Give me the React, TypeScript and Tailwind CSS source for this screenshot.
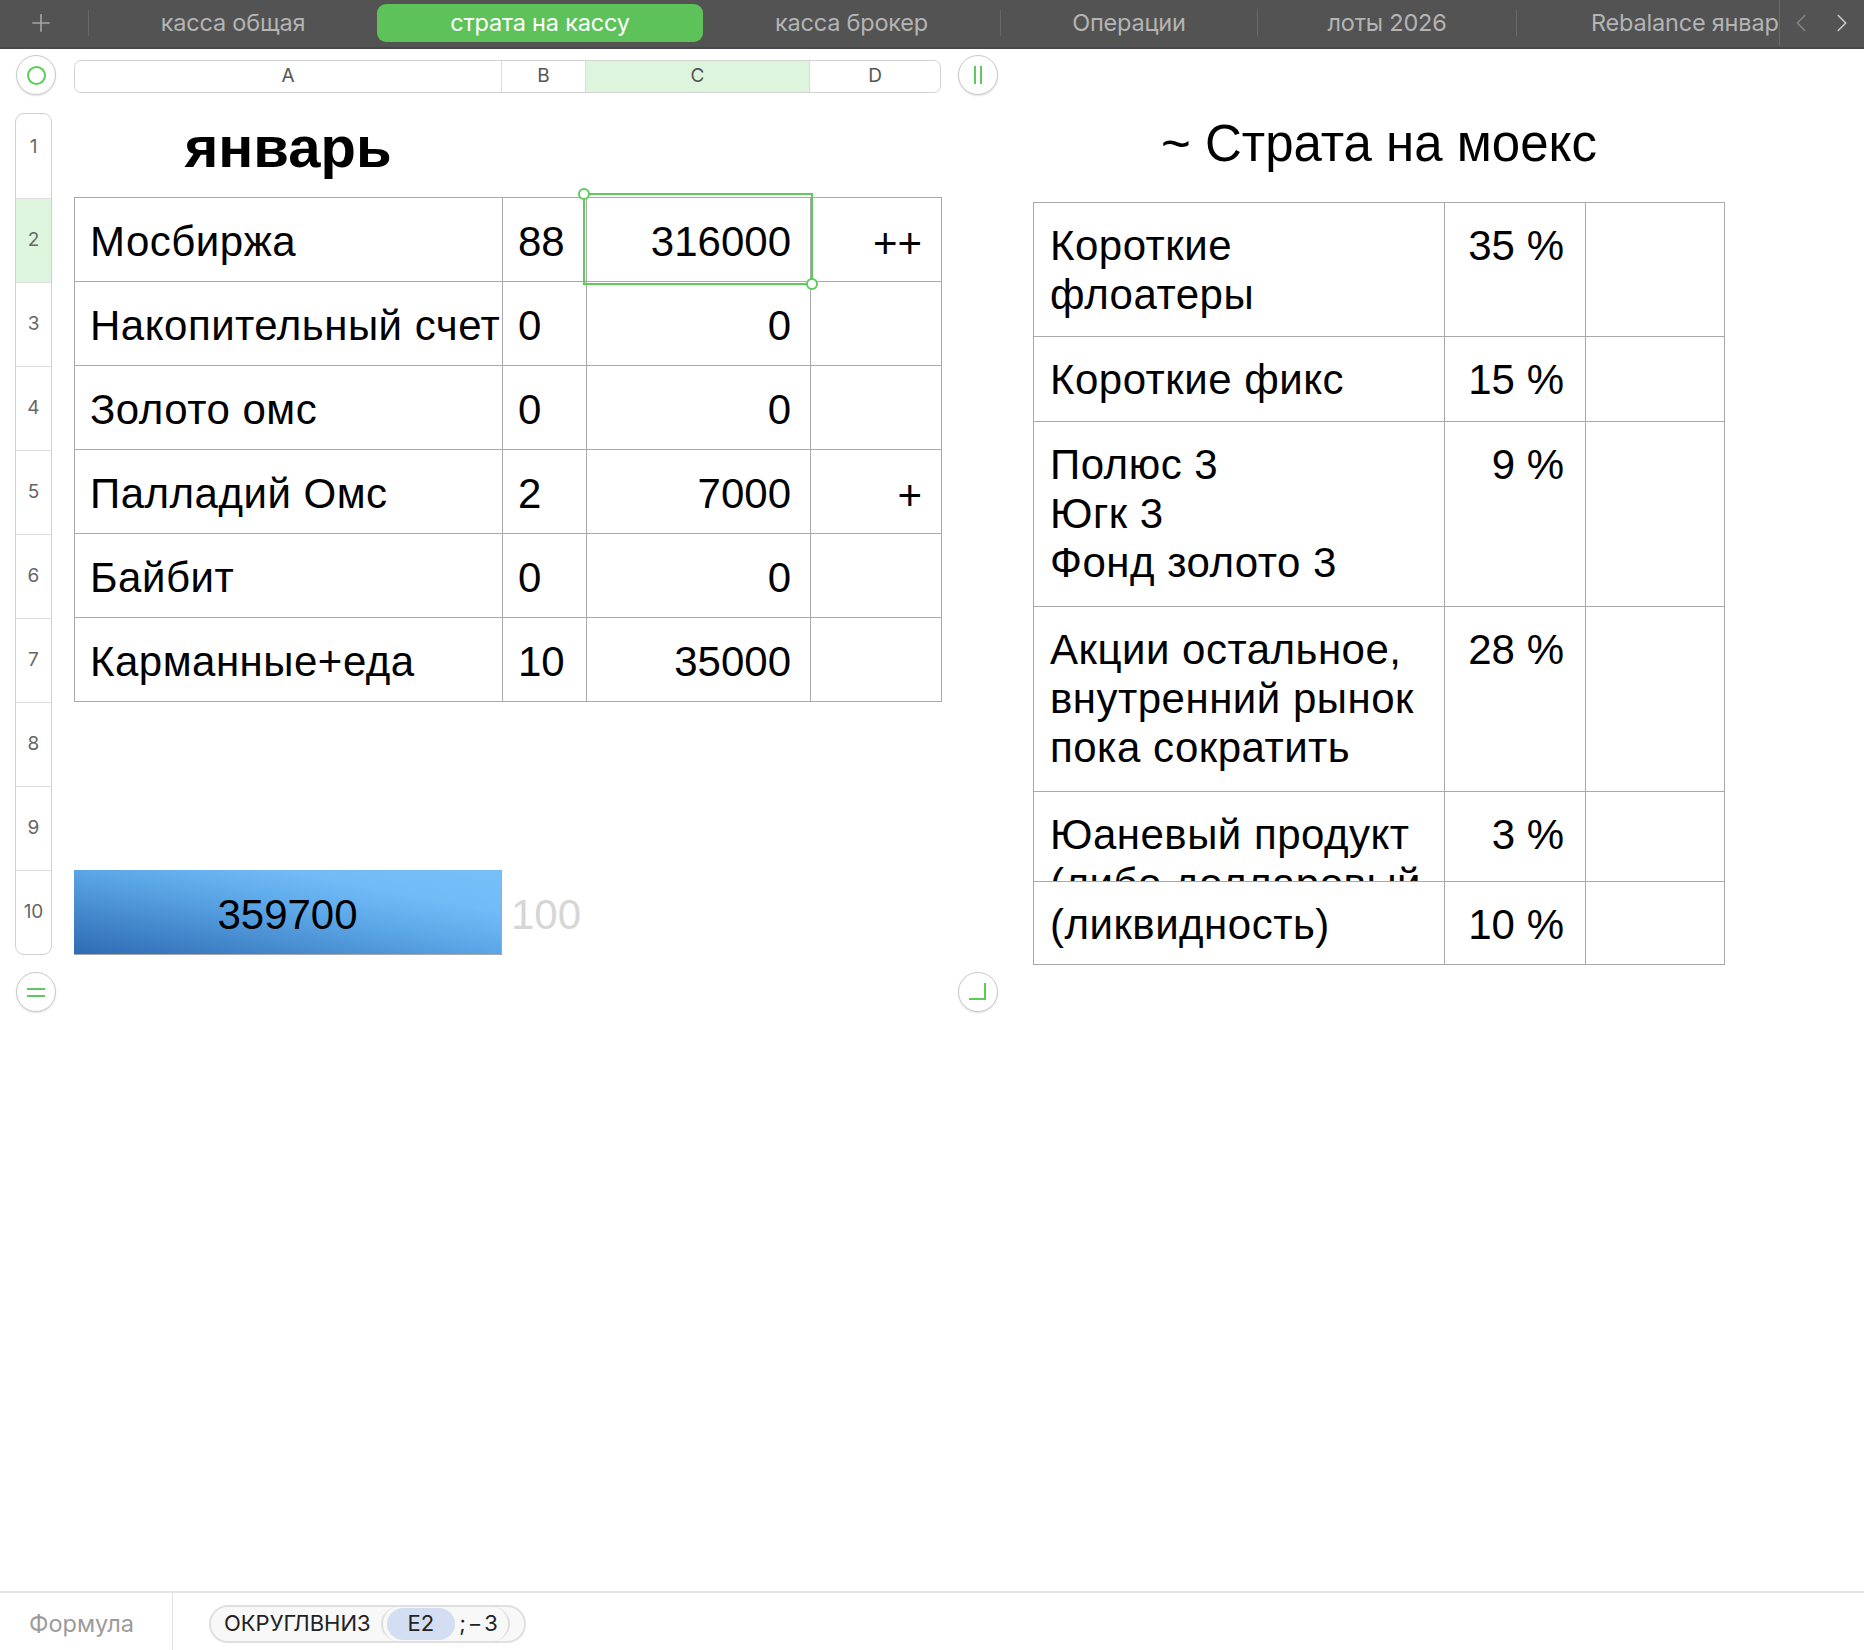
import { ChevronLeft, ChevronRight, Plus } from 'lucide-react'

const leftRows = [
  ['Мосбиржа', '88', '316000', '++'],
  ['Накопительный счет', '0', '0', ''],
  ['Золото омс', '0', '0', ''],
  ['Палладий Омс', '2', '7000', '+'],
  ['Байбит', '0', '0', ''],
  ['Карманные+еда', '10', '35000', ''],
]

const strata = [
  { name: 'Короткие\nфлоатеры', pct: '35 %', h: 'h-[133px]' },
  { name: 'Короткие фикс', pct: '15 %', h: 'h-[84px]' },
  { name: 'Полюс 3\nЮгк 3\nФонд золото 3', pct: '9 %', h: 'h-[184px]' },
  { name: 'Акции остальное,\nвнутренний рынок\nпока сократить', pct: '28 %', h: 'h-[184px]' },
  { name: 'Юаневый продукт\n(либо долларовый', pct: '3 %', h: 'h-[89px]' },
  { name: '(ликвидность)', pct: '10 %', h: 'h-[82px]' },
]

function TabDivider() {
  return <div className="h-[26px] w-px bg-[#686868]" />
}

function TabBar() {
  return (
    <div className="flex h-[49px] shrink-0 items-center border-b-2 border-[#474747] bg-[#535353] pb-[2px] font-['Inter',sans-serif] text-[23.5px] tracking-[-0.2px] text-[#b4b4b4]">
      <div className="flex w-[82px] justify-center">
        <Plus size={28} strokeWidth={1.4} className="text-[#a5a5a5]" />
      </div>
      <div className="ml-[6px]">
        <TabDivider />
      </div>
      <div className="flex w-[288px] justify-center">касса общая</div>
      <div className="flex h-[38px] w-[326px] items-center justify-center rounded-[9px] bg-[#5ec25a] text-white">
        страта на кассу
      </div>
      <div className="flex w-[297px] justify-center">касса брокер</div>
      <TabDivider />
      <div className="flex w-[256px] justify-center">Операции</div>
      <TabDivider />
      <div className="flex w-[258px] justify-center">лоты 2026</div>
      <TabDivider />
      <div className="w-[262px] overflow-hidden whitespace-nowrap pl-[74px]">Rebalance январь</div>
      <div className="h-[47px] w-px bg-[#6a6a6a]" />
      <div className="flex flex-1 items-center justify-around pr-[2px]">
        <ChevronLeft size={30} strokeWidth={1.3} className="text-[#858585]" />
        <ChevronRight size={30} strokeWidth={1.3} className="text-[#c8c8c8]" />
      </div>
    </div>
  )
}

function Handle({ children, className = '' }: { children: React.ReactNode; className?: string }) {
  return (
    <div
      className={`flex h-10 w-10 shrink-0 items-center justify-center rounded-full border border-[#c9c9c9] bg-white shadow-[0_1px_2px_rgba(0,0,0,0.12)] ${className}`}
    >
      {children}
    </div>
  )
}

function ColumnHeader() {
  return (
    <div className="ml-[18px] mt-[3px] flex h-[33px] w-[867px] overflow-hidden rounded-[7px] border border-[#d2d2d2] font-['Inter',sans-serif] text-[19px] text-[#555]">
      <div className="flex w-[427px] items-center justify-center border-r border-[#dcdcdc]">A</div>
      <div className="flex w-[84px] items-center justify-center border-r border-[#dcdcdc]">B</div>
      <div className="flex w-[224px] items-center justify-center border-r border-[#c6e6c6] bg-[#dcf5dc]">C</div>
      <div className="flex flex-1 items-center justify-center">D</div>
    </div>
  )
}

function RowHeaders() {
  return (
    <div className="flex w-[37px] shrink-0 flex-col overflow-hidden rounded-[9px] border border-[#d0d0d0] font-['Inter',sans-serif] text-[19px] text-[#666]">
      {[1, 2, 3, 4, 5, 6, 7, 8, 9, 10].map((n) => (
        <div
          key={n}
          className={`flex h-[84px] items-center justify-center ${n > 1 ? 'border-t border-[#dedede]' : 'pb-[18px]'} ${
            n === 2 ? 'bg-[#dcf5dc]' : ''
          }`}
        >
          {n}
        </div>
      ))}
    </div>
  )
}

function LeftSheet() {
  return (
    <div className="flex w-[998px] shrink-0 flex-col pl-[15px] pt-[6px]">
      <div className="flex items-center">
        <Handle className="ml-px">
          <div className="h-[19px] w-[19px] rounded-full border-2 border-[#5ccb5c]" />
        </Handle>
        <ColumnHeader />
        <Handle className="ml-[17px]">
          <div className="flex gap-[4px]">
            <div className="h-[18px] w-[2px] bg-[#5ccb5c]" />
            <div className="h-[18px] w-[2px] bg-[#5ccb5c]" />
          </div>
        </Handle>
      </div>

      <div className="mt-[18px] flex items-start">
        <RowHeaders />
        <div className="ml-[22px] flex w-[868px] flex-col text-[42px]">
          <div className="flex h-[84px] w-[428px] items-center justify-center pb-[18px] text-[58px] font-bold">
            январь
          </div>

          <div className="relative">
            <div className="grid grid-cols-[427px_83px_223px_130px] gap-px border border-[#a9a9a9] bg-[#a9a9a9]">
              {leftRows.map((r, i) => (
                <div key={i} className="contents">
                  <div className="flex h-[83px] items-center overflow-hidden whitespace-nowrap bg-white pl-[15px] pt-[4px] tracking-[0.5px]">
                    {r[0]}
                  </div>
                  <div className="flex h-[83px] items-center bg-white pl-[15px] pt-[4px]">{r[1]}</div>
                  <div className="flex h-[83px] items-center justify-end bg-white pr-[19px] pt-[4px]">{r[2]}</div>
                  <div className="flex h-[83px] items-center justify-end bg-white pr-[19px] pt-[7px]">{r[3]}</div>
                </div>
              ))}
            </div>
            <div className="absolute left-[509px] top-[-4px] h-[92px] w-[230px] border-2 border-[#5ccb5c]">
              <div className="absolute left-[-7px] top-[-7px] h-[12px] w-[12px] rounded-full border-2 border-[#5ccb5c] bg-white" />
              <div className="absolute bottom-[-7px] right-[-7px] h-[12px] w-[12px] rounded-full border-2 border-[#5ccb5c] bg-white" />
            </div>
          </div>

          <div className="h-[168px]" />

          <div className="flex h-[85px] items-center">
            <div className="flex h-full w-[428px] items-center justify-center border-b border-r border-[#a9a9a9] bg-[linear-gradient(to_top_right,#2f6bb3_0%,#5aa5e5_50%,#71bcf7_75%,#75c0f8_100%)] pt-[4px]">
              359700
            </div>
            <div className="pl-[9px] pt-[4px] text-[#d6d6d6]">100</div>
          </div>
        </div>
      </div>

      <div className="mt-[17px] flex items-center">
        <Handle className="ml-px">
          <div className="flex flex-col gap-[5px]">
            <div className="h-[2px] w-[18px] bg-[#5ccb5c]" />
            <div className="h-[2px] w-[18px] bg-[#5ccb5c]" />
          </div>
        </Handle>
        <Handle className="ml-[902px]">
          <div className="ml-[-2px] mt-[-2px] h-[17px] w-[17px] border-b-2 border-r-2 border-[#5ccb5c]" />
        </Handle>
      </div>
    </div>
  )
}

function StrataTable() {
  return (
    <div className="ml-[35px] flex w-[692px] shrink-0 flex-col pt-[66px] text-[42px]">
      <div className="text-center text-[51px] leading-[58px]">~ Страта на моекс</div>
      <div className="mt-[29px] grid grid-cols-[410px_140px_138px] gap-px border border-[#a9a9a9] bg-[#a9a9a9] leading-[49px]">
        {strata.map((r, i) => (
          <div key={i} className="contents">
            <div className={`${r.h} overflow-hidden whitespace-pre-line bg-white pl-[16px] pt-[18px] tracking-[0.5px]`}>
              {r.name}
            </div>
            <div className={`${r.h} bg-white pr-[21px] pt-[18px] text-right`}>{r.pct}</div>
            <div className={`${r.h} bg-white`} />
          </div>
        ))}
      </div>
    </div>
  )
}

function FormulaBar() {
  return (
    <div className="flex h-[59px] shrink-0 items-center border-t-2 border-[#e4e4e4] bg-white pt-[4px] font-['Inter',sans-serif]">
      <div className="w-[172px] pl-[29px] text-[23.5px] text-[#9b9b9b]">Формула</div>
      <div className="-mt-[4px] h-[59px] w-px bg-[#e2e2e2]" />
      <div className="ml-[36px] flex h-[38px] items-center rounded-full border-2 border-[#e0e0e0] bg-[#f8f8f8] pl-[13px] text-[22px] text-[#222]">
        <span>ОКРУГЛВНИЗ</span>
        <div className="ml-[10px] flex h-[34px] items-center rounded-full border-x-2 border-[#dedede] pl-[4px] pr-[8px]">
          <span className="flex h-[32px] items-center rounded-full bg-[#d3def3] px-[21px]">E2</span>
          <span className="ml-[4px] tracking-[2px]">;−3</span>
        </div>
        <div className="w-[14px]" />
      </div>
    </div>
  )
}

export default function App() {
  return (
    <div className="flex h-[1650px] w-[1864px] flex-col overflow-hidden bg-white font-['Liberation_Sans',Arial,sans-serif] text-black">
      <TabBar />
      <main className="flex flex-1 items-start">
        <LeftSheet />
        <StrataTable />
      </main>
      <FormulaBar />
    </div>
  )
}
